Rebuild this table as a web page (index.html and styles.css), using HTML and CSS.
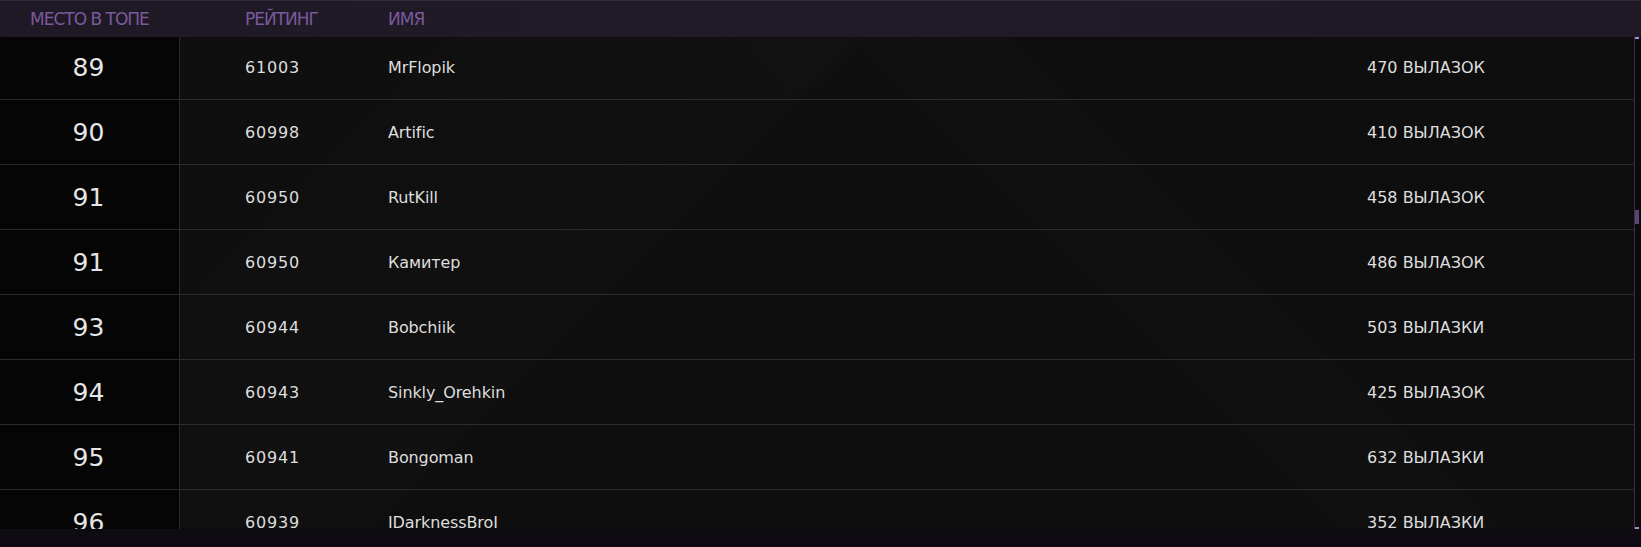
FILE: index.html
```html
<!DOCTYPE html>
<html lang="ru">
<head>
<meta charset="utf-8">
<title>Рейтинг</title>
<link rel="stylesheet" href="styles.css">
</head>
<body>
<div class="board">
  <div class="head">
    <div class="hcell hplace">МЕСТО В ТОПЕ</div>
    <div class="hcell hrate">РЕЙТИНГ</div>
    <div class="hcell hname">ИМЯ</div>
    <div class="hcell"></div>
  </div>
  <div class="body">
    <div class="viewport">
      <div class="rows">
        <div class="row"><div class="place">89</div><div class="rate">61003</div><div class="name">MrFlopik</div><div class="runs">470 ВЫЛАЗОК</div></div>
        <div class="row"><div class="place">90</div><div class="rate">60998</div><div class="name">Artific</div><div class="runs">410 ВЫЛАЗОК</div></div>
        <div class="row"><div class="place">91</div><div class="rate">60950</div><div class="name">RutKill</div><div class="runs">458 ВЫЛАЗОК</div></div>
        <div class="row"><div class="place">91</div><div class="rate">60950</div><div class="name">Камитер</div><div class="runs">486 ВЫЛАЗОК</div></div>
        <div class="row"><div class="place">93</div><div class="rate">60944</div><div class="name">Bobchiik</div><div class="runs">503 ВЫЛАЗКИ</div></div>
        <div class="row"><div class="place">94</div><div class="rate">60943</div><div class="name">Sinkly_Orehkin</div><div class="runs">425 ВЫЛАЗОК</div></div>
        <div class="row"><div class="place">95</div><div class="rate">60941</div><div class="name">Bongoman</div><div class="runs">632 ВЫЛАЗКИ</div></div>
        <div class="row"><div class="place">96</div><div class="rate">60939</div><div class="name">IDarknessBroI</div><div class="runs">352 ВЫЛАЗКИ</div></div>
      </div>
    </div>
    <div class="scrollbar">
      <div class="tick"></div>
      <div class="track"><div class="thumb"></div></div>
      <div class="tick"></div>
    </div>
  </div>
  <div class="foot"></div>
</div>
</body>
</html>
```
FILE: styles.css
```css
html, body {
  margin: 0;
  padding: 0;
  background: #0e0c12;
}
body {
  font-family: "DejaVu Sans", "Noto Sans", sans-serif;
  width: 1641px;
  height: 547px;
  overflow: hidden;
}
.board {
  display: flex;
  flex-direction: column;
  width: 1641px;
  height: 547px;
}
.head {
  height: 36px;
  border-top: 1px solid #302a3a;
  background: linear-gradient(90deg, #1f1926 0%, #211a28 50%, #1f1925 100%);
  display: grid;
  grid-template-columns: 180px 208px 979px 1fr;
  align-items: center;
  flex: none;
}
.hcell {
  color: #7a5a9b;
  font-size: 17px;
  letter-spacing: -1px;
  line-height: 20px;
}
.hplace { padding-left: 30px; }
.hrate { padding-left: 65px; }
.hname { padding-left: 0; }
.body {
  height: 492px;
  display: flex;
  flex: none;
}
.viewport {
  flex: 1;
  overflow: hidden;
  background:
    linear-gradient(135deg, rgba(255,255,255,0) 0%, rgba(255,255,255,0.012) 40%, rgba(255,255,255,0) 41%),
    linear-gradient(45deg, rgba(255,255,255,0) 55%, rgba(255,255,255,0.012) 70%, rgba(255,255,255,0) 71%),
    #0e0e0f;
}
.rows {
  margin-top: -2px;
}
.row {
  display: grid;
  grid-template-columns: 180px 208px 979px 1fr;
  height: 64px;
  border-bottom: 1px solid #2c2931;
  align-items: stretch;
}
.place {
  background: #050505;
  border-right: 1px solid #2a272e;
  color: #e6e6e6;
  font-size: 25px;
  display: flex;
  align-items: center;
  justify-content: center;
  padding-right: 2px;
}
.rate, .name, .runs {
  color: #dedede;
  font-size: 16px;
  display: flex;
  align-items: center;
}
.rate { padding-left: 65px; letter-spacing: 0.8px; }
.name { letter-spacing: -0.1px; }
.runs { letter-spacing: 0; }
.scrollbar {
  width: 6px;
  border-left: 1px solid #38323e;
  background: #0c0a0f;
  display: flex;
  flex-direction: column;
}
.tick {
  height: 2px;
  width: 4px;
  background: #a98ad6;
  flex: none;
}
.track {
  flex: 1;
}
.thumb {
  margin-top: 171px;
  width: 4px;
  height: 14px;
  background: #5b4574;
}
.foot {
  flex: 1;
  background: #0e0c12;
}
```
